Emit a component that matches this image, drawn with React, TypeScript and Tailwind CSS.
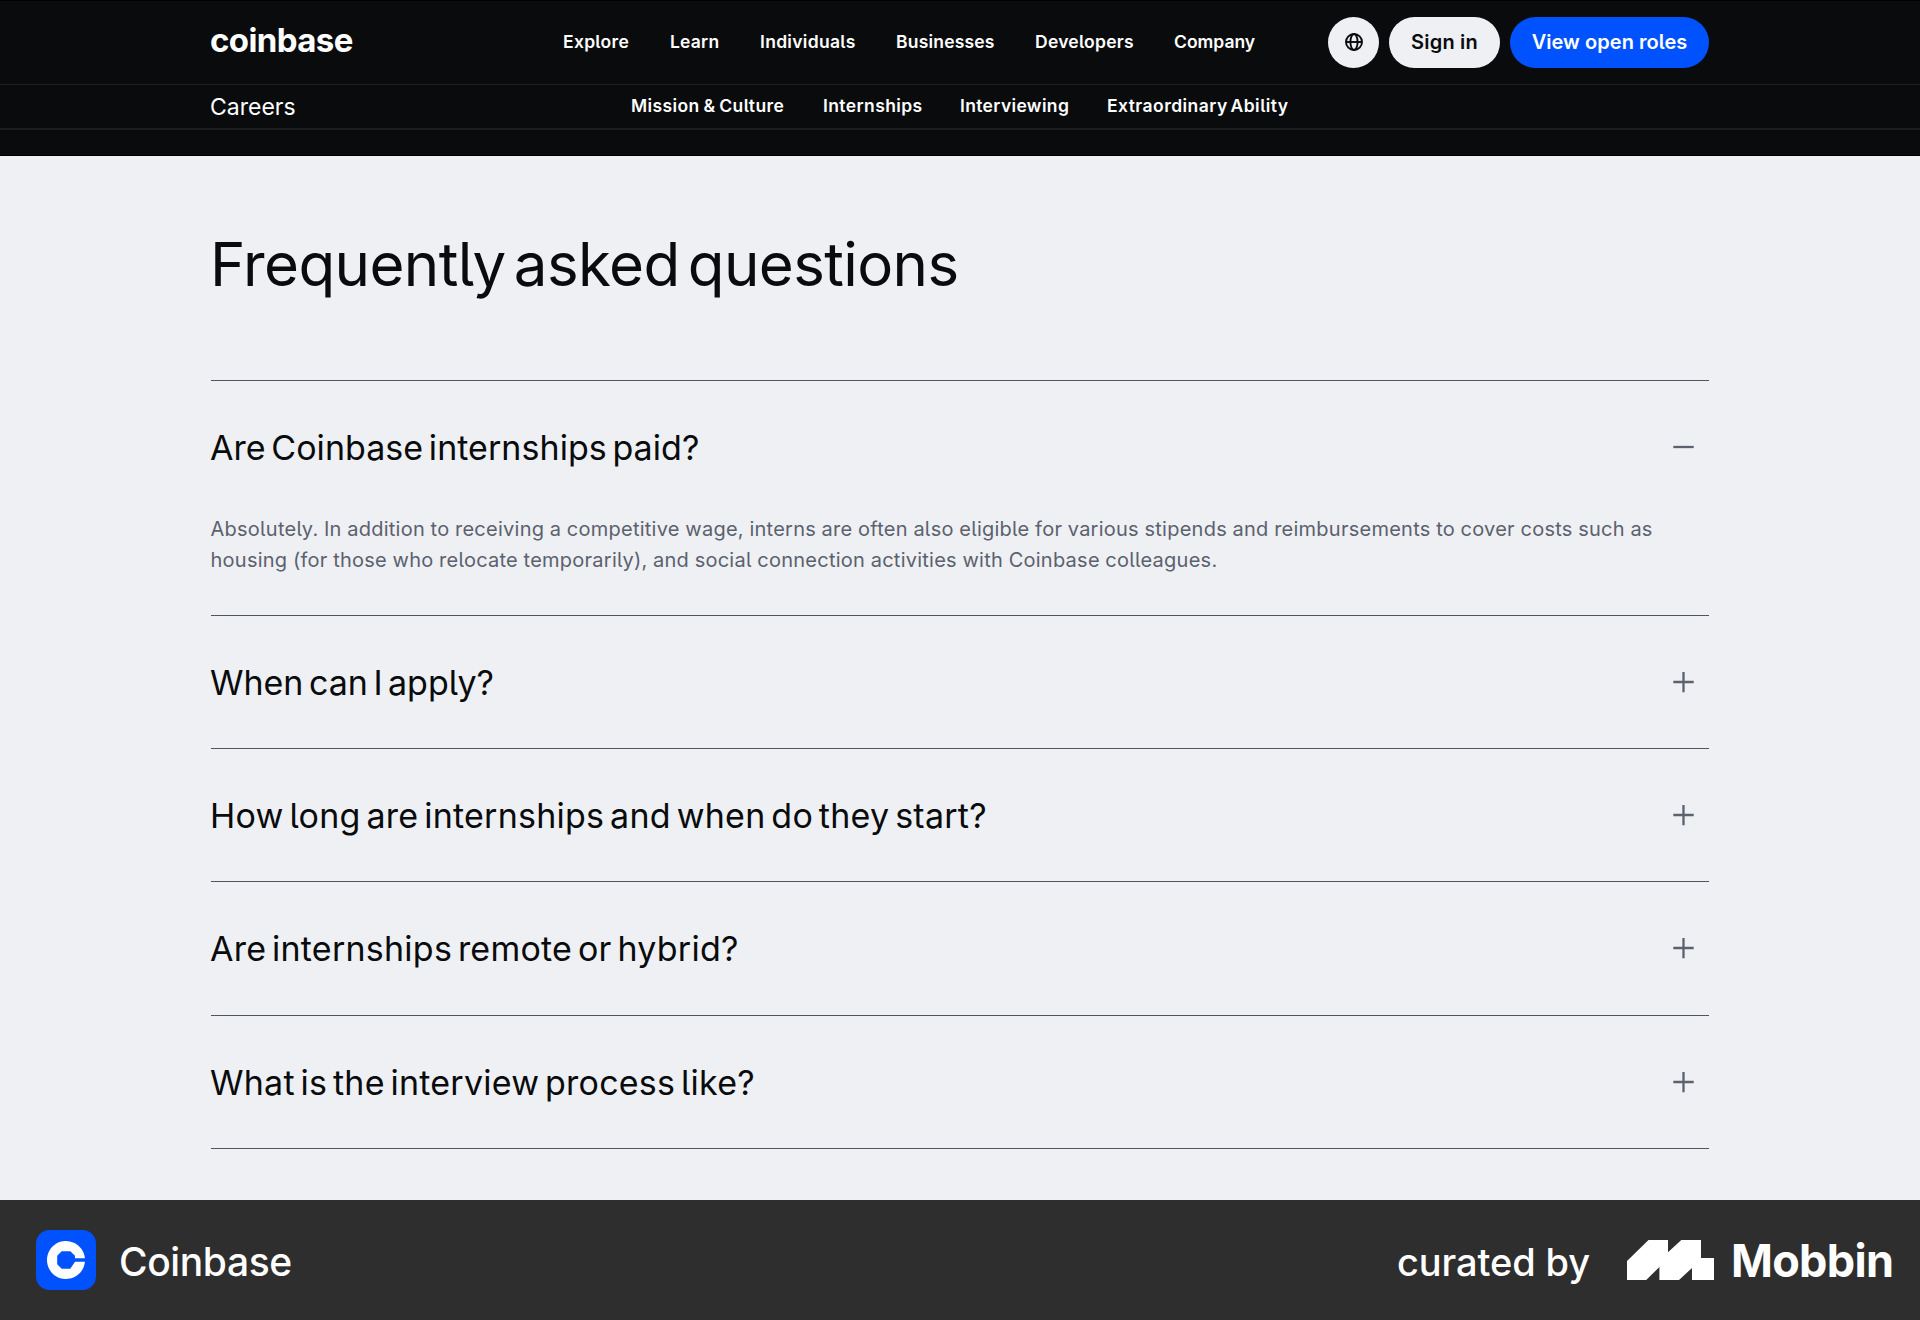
import { useState } from "react";

const primaryNav = [
  { label: "Explore", className: "w-[107px] tracking-[0.3px]" },
  { label: "Learn", className: "w-[90px] tracking-[0.2px]" },
  { label: "Individuals", className: "w-[136px] tracking-[0.3px]" },
  { label: "Businesses", className: "w-[139px] tracking-[0.2px]" },
  { label: "Developers", className: "w-[139px] tracking-[0.25px]" },
  { label: "Company", className: "w-[89px]" },
];

const careersNav = [
  { label: "Mission & Culture", className: "w-[192px] tracking-[0.4px] [word-spacing:-1px]" },
  { label: "Internships", className: "w-[137px] tracking-[0.4px]" },
  { label: "Interviewing", className: "w-[147px] tracking-[0.35px]" },
  { label: "Extraordinary Ability", className: "w-[190px] tracking-[0.45px] [word-spacing:-2px]" },
];

const faqs = [
  {
    question: "Are Coinbase internships paid?",
    tracking: "tracking-[0.05px]",
    height: "h-[235px]",
    answer: [
      "Absolutely. In addition to receiving a competitive wage, interns are often also eligible for various stipends and reimbursements to cover costs such as",
      "housing (for those who relocate temporarily), and social connection activities with Coinbase colleagues.",
    ],
  },
  { question: "When can I apply?", tracking: "tracking-[-0.02px]", height: "h-[133px]" },
  {
    question: "How long are internships and when do they start?",
    tracking: "tracking-[0.25px]",
    height: "h-[133px]",
  },
  { question: "Are internships remote or hybrid?", tracking: "tracking-[0.24px]", height: "h-[134px]" },
  { question: "What is the interview process like?", tracking: "tracking-[0.23px]", height: "h-[133px]" },
];

function GlobeIcon() {
  return (
    <svg width="18" height="18" viewBox="0 0 18 18" fill="none" stroke="#0a0b0d" strokeWidth="1.9">
      <circle cx="9" cy="9" r="8" />
      <ellipse cx="9" cy="9" rx="3.6" ry="8" />
      <path d="M1 9h16" />
    </svg>
  );
}

function ToggleIcon({ open }: { open: boolean }) {
  return (
    <svg width="21" height="21" viewBox="0 0 21 21" stroke="#5b616e" strokeWidth="2.3" fill="none">
      <path d={open ? "M0.3 10h20.4" : "M0.3 10h20.4M10.5 -0.2v20.4"} />
    </svg>
  );
}

function CoinbaseIcon() {
  return (
    <svg width="60" height="60" viewBox="0 0 60 60">
      <rect width="60" height="60" rx="13.5" fill="#0052ff" />
      <path
        fill="#fff"
        d="M48.9 28.3A19 19 0 1 0 48.9 31.7H39L34.3 38.8H25.7L21.2 34.3V25.7L25.7 21.2H34.3L39 25.7V28.3Z"
      />
    </svg>
  );
}

function MobbinIcon() {
  return (
    <svg width="87" height="40" viewBox="0 0 87 40" fill="#fff">
      <path d="M0 21L21.5 0H41V12.3L54.3 0H74V18H87V40H65V28L52 40H32.4V27L19.2 40H0Z" />
    </svg>
  );
}

export default function App() {
  const [openIndex, setOpenIndex] = useState(0);

  return (
    <div className="flex h-[1320px] w-[1920px] flex-col overflow-hidden bg-[#eef0f3] font-['Inter',sans-serif] whitespace-nowrap text-[#0a0b0d] [font-feature-settings:'cv05']">
      <header className="h-[156px] shrink-0 border-y border-black bg-[#0a0b0d] text-white">
        <div className="flex h-[84px] items-center border-b border-[#1e2023] pb-[1px] pl-[210px]">
          <div className="w-[353px] pb-[3px] text-[33px] leading-none font-bold tracking-[-0.6px]">
            coinbase
          </div>
          <nav className="flex w-[765px] text-[17.5px] leading-6 font-semibold">
            {primaryNav.map((item) => (
              <a key={item.label} href="#" className={item.className}>
                {item.label}
              </a>
            ))}
          </nav>
          <div className="flex items-center gap-[10px]">
            <button className="flex size-[51px] items-center justify-center rounded-full bg-[#eef0f3]" aria-label="Language">
              <GlobeIcon />
            </button>
            <button className="h-[51px] w-[111px] rounded-full bg-[#eef0f3] text-[20px] font-semibold tracking-[0.2px] text-[#0a0b0d]">
              Sign in
            </button>
            <button className="h-[51px] w-[199px] rounded-full bg-[#0052ff] text-[20px] font-semibold tracking-[0.05px]">
              View open roles
            </button>
          </div>
        </div>
        <div className="flex h-[45px] items-center border-b-2 border-[#1b1d20] pl-[210px]">
          <div className="w-[421px] pt-[1px] text-[23px] leading-none">Careers</div>
          <nav className="flex pb-[1px] text-[17.5px] leading-6 font-semibold">
            {careersNav.map((item) => (
              <a key={item.label} href="#" className={item.className}>
                {item.label}
              </a>
            ))}
          </nav>
        </div>
      </header>

      <main className="h-[1044px] shrink-0 px-[211px]">
        <h1 className="-ml-[1px] pt-[71px] text-[60px] leading-[74px] tracking-[-0.6px] [word-spacing:-8px]">
          Frequently asked questions
        </h1>
        <div className="mt-[79px] border-b border-[#4f5560]">
          {faqs.map((faq, i) => (
            <section key={faq.question} className={`border-t border-[#4f5560] ${faq.height}`}>
              <button
                className="flex h-[133px] w-full items-center justify-between pr-[15px] text-left"
                onClick={() => setOpenIndex(openIndex === i ? -1 : i)}
              >
                <span className={`-ml-[1px] text-[34px] leading-[42px] [word-spacing:-4px] ${faq.tracking}`}>
                  {faq.question}
                </span>
                <ToggleIcon open={openIndex === i} />
              </button>
              {faq.answer && openIndex === i && (
                <p className="-ml-[0.5px] text-[20px] leading-[30.5px] tracking-[0.25px] text-[#5b616e] [word-spacing:-0.3px]">
                  {faq.answer.map((line) => (
                    <span key={line} className="block">
                      {line}
                    </span>
                  ))}
                </p>
              )}
            </section>
          ))}
        </div>
      </main>

      <footer className="flex h-[120px] shrink-0 items-center bg-[#2e2e2e] pl-9 text-white">
        <CoinbaseIcon />
        <div className="ml-[23px] w-[1278px] pt-1 text-[39px] leading-[48px] font-medium tracking-[-0.4px] [font-feature-settings:normal]">
          Coinbase
        </div>
        <div className="w-[230px] pt-1 text-[38px] leading-[48px] font-medium tracking-[-0.1px]">curated by</div>
        <MobbinIcon />
        <div className="ml-[17px] pt-[2px] text-[45px] leading-[48px] font-bold tracking-[-0.7px]">Mobbin</div>
      </footer>
    </div>
  );
}
